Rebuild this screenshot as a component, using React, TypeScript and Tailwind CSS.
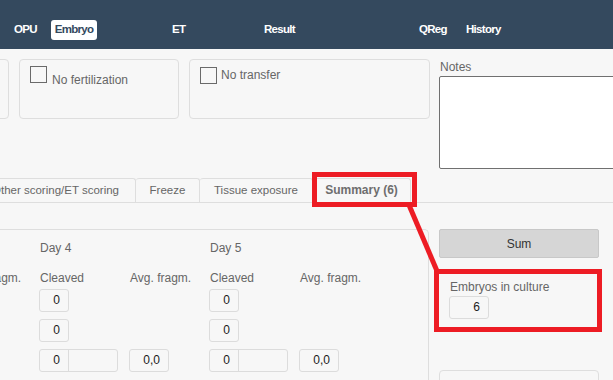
import React from "react";

const NUM = "h-[23px] rounded-[3px] border border-[#dcdcdc] bg-[#f7f7f7] text-right pr-[8px] text-[12px] leading-[21px] text-[#1b1b1b]";

function DayColumn({ day }: { day: string }) {
  return (
    <div className="w-[170px] shrink-0 flex flex-col">
      <div className="h-[16px] leading-[16px]">{day}</div>
      <div className="grid grid-cols-[90px_80px] mt-[14px]">
        <div className="h-[16px] leading-[16px]">Cleaved</div>
        <div className="h-[16px] leading-[16px]">Avg. fragm.</div>
      </div>
      <div className="mt-[3px] flex flex-col gap-[7px]">
        <div className={`${NUM} w-[30px] ml-[-1px]`}>0</div>
        <div className={`${NUM} w-[30px] ml-[-1px]`}>0</div>
        <div className="flex">
          <div className="w-[90px] ml-[-1px] flex">
            <div className="flex h-[23px] w-[79px] rounded-[3px] border border-[#dcdcdc]">
              <div className="w-[29px] border-r border-[#dcdcdc] text-right pr-[8px] text-[12px] leading-[21px] text-[#1b1b1b]">0</div>
            </div>
          </div>
          <div className={`${NUM} w-[40px]`}>0,0</div>
        </div>
      </div>
    </div>
  );
}

export default function App() {
  return (
    <div className="relative w-[613px] h-[380px] overflow-hidden bg-[#f7f7f7] font-['Liberation_Sans',Arial,sans-serif] text-[12px] text-[#666]">
      {/* top navigation */}
      <header className="h-[49px] bg-[#34495e] flex items-center pt-[10px] text-white font-bold text-[11.5px] tracking-[-0.7px]">
        <span className="ml-[14px] w-[37px]">OPU</span>
        <span className="w-[46px] h-[20px] rounded-[3px] bg-white text-[#34495e] flex items-center justify-center">Embryo</span>
        <span className="ml-[75px] w-[92px]">ET</span>
        <span className="w-[155px]">Result</span>
        <span className="w-[47px]">QReg</span>
        <span>History</span>
      </header>

      {/* options + notes */}
      <div className="flex items-start mt-[10px]">
        <div className="ml-[-150px] w-[159px] h-[60px] shrink-0 rounded-[4px] border border-[#dedede]" />
        <div className="ml-[10px] w-[160px] h-[60px] shrink-0 rounded-[4px] border border-[#dedede]">
          <div className="flex items-start pl-[10px] pt-[6px]">
            <div className="w-[17px] h-[17px] border border-[#6a6a6a]" />
            <span className="ml-[5px] mt-[6px] text-[12px] leading-[16px]">No fertilization</span>
          </div>
        </div>
        <div className="ml-[10px] w-[241px] h-[60px] shrink-0 rounded-[4px] border border-[#dedede]">
          <div className="flex items-start pl-[10px] pt-[7px]">
            <div className="w-[17px] h-[17px] border border-[#6a6a6a]" />
            <span className="ml-[4px] text-[12px] leading-[16px]">No transfer</span>
          </div>
        </div>
        <div className="ml-[9px] w-[176px] shrink-0 flex flex-col">
          <span className="h-[16px] leading-[16px] pl-[1px]">Notes</span>
          <div className="mt-[1px] h-[93px] rounded-[2px] border border-[#707070] bg-white" />
        </div>
      </div>

      {/* tabs */}
      <div className="mt-[10px] flex items-end h-[24px] border-b border-[#dedede] text-[11.5px]">
        <div className="ml-[-25px] w-[161px] h-[24px] shrink-0 border border-b-0 border-[#dedede] rounded-t-[3px] text-right pr-[16px] leading-[23px]">Other scoring/ET scoring</div>
        <div className="w-[64px] h-[24px] shrink-0 border border-l-0 border-b-0 border-[#dedede] rounded-t-[3px] text-center leading-[23px]">Freeze</div>
        <div className="w-[113px] h-[24px] shrink-0 border border-l-0 border-b-0 border-[#dedede] rounded-t-[3px] text-center leading-[23px]">Tissue exposure</div>
        <div className="w-[98px] h-[25px] mb-[-1px] shrink-0 bg-[#f7f7f7] border border-l-0 border-b-0 border-[#dedede] rounded-t-[3px] text-center leading-[23px] font-bold text-[#6e6e6e] text-[12px]">Summary (6)</div>
      </div>

      {/* summary content */}
      <div className="mt-[26px] flex items-start">
        <div className="ml-[-10px] w-[439px] h-[200px] shrink-0 border-t border-r border-[#dedede] rounded-tr-[5px] overflow-hidden">
          <div className="ml-[-120px] pt-[10px] flex">
            <DayColumn day="Day 3" />
            <DayColumn day="Day 4" />
            <DayColumn day="Day 5" />
          </div>
        </div>
        <div className="ml-[10px] w-[160px] shrink-0 flex flex-col">
          <button className="h-[29px] rounded-[2px] border border-[#c8c8c8] bg-[#d6d6d6] text-[#333] text-[12px]">Sum</button>
          <span className="mt-[21px] pl-[11px] h-[16px] leading-[16px]">Embryos in culture</span>
          <div className={`${NUM} w-[40px] ml-[10px] mt-[1px] h-[22px]`}>6</div>
          <div className="mt-[51px] h-[40px] rounded-[4px] border border-[#dedede]" />
        </div>
      </div>

      {/* red annotations */}
      <div className="absolute left-[312px] top-[172px] w-[105px] h-[35px] border-[5px] border-[#ed1c24] pointer-events-none" />
      <div className="absolute left-[434px] top-[269px] w-[168px] h-[63px] border-[5px] border-[#ed1c24] pointer-events-none" />
      <svg className="absolute left-0 top-0 pointer-events-none" width="613" height="380">
        <line x1="409" y1="205" x2="437" y2="271" stroke="#ed1c24" strokeWidth="5" />
      </svg>
    </div>
  );
}
